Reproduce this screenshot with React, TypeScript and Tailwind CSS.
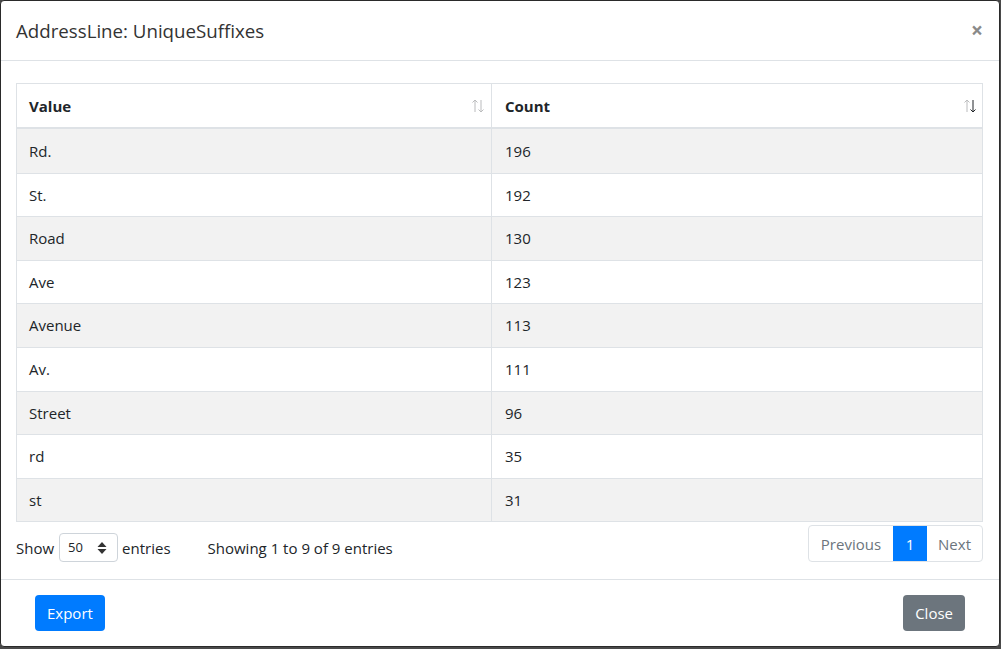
import React from "react";

const rows: [string, string][] = [
  ["Rd.", "196"],
  ["St.", "192"],
  ["Road", "130"],
  ["Ave", "123"],
  ["Avenue", "113"],
  ["Av.", "111"],
  ["Street", "96"],
  ["rd", "35"],
  ["st", "31"],
];

function SortIcon({ active }: { active?: boolean }) {
  return (
    <svg width="14" height="16" viewBox="0 0 14 16" className="shrink-0">
      <g stroke="#212529" strokeWidth="1" fill="none" opacity="0.3">
        <path d="M4 2 V14" />
        <path d="M1.5 4.5 L4 2 L6.5 4.5" />
      </g>
      <g stroke="#212529" strokeWidth="1" fill="none" opacity={active ? 1 : 0.3}>
        <path d="M10 2 V14" />
        <path d="M7.5 11.5 L10 14 L12.5 11.5" />
      </g>
    </svg>
  );
}

export default function App() {
  return (
    <div className="w-[1001px] h-[649px] bg-[#4a4a4a] overflow-hidden" style={{ fontFamily: '"Open Sans", sans-serif' }}>
      <div className="w-[1000px] h-[647px] bg-white rounded-[4px] border border-[#2a2a2a] flex flex-col text-[15px] text-[#212529]">
        {/* header */}
        <div className="h-[60px] shrink-0 flex items-center justify-between px-[15px] border-b border-[#dee2e6]">
          <div className="text-[18.7px] text-[#333] pt-[2px]">AddressLine: UniqueSuffixes</div>
          <div className="text-[21px] font-bold text-[#8a8a8a] leading-none pr-[1px]">×</div>
        </div>
        {/* body */}
        <div className="flex-1 pl-[15px] pr-[16px] pt-[22px]">
          <div className="border border-[#dee2e6]">
            <div className="flex h-[45px] border-b-2 border-[#dee2e6] font-bold">
              <div className="w-[475px] flex items-center justify-between pl-[12px] pr-[6px] border-r border-[#dee2e6]">
                <span className="pt-[1px]">Value</span>
                <SortIcon />
              </div>
              <div className="flex-1 flex items-center justify-between pl-[13px] pr-[5px]">
                <span className="pt-[1px]">Count</span>
                <SortIcon active />
              </div>
            </div>
            {rows.map(([v, c], i) => (
              <div
                key={v}
                className={`flex h-[43.6px] ${i > 0 ? "border-t border-[#dee2e6]" : ""} ${i % 2 === 0 ? "bg-[#f2f2f2]" : "bg-white"}`}
              >
                <div className="w-[475px] flex items-center pl-[12px] border-r border-[#dee2e6]">{v}</div>
                <div className="flex-1 flex items-center pl-[13px]">{c}</div>
              </div>
            ))}
          </div>
          <div className="flex items-start justify-between mt-[3px]">
            <div className="flex items-center h-[37px] mt-[4px]">
              <span>Show</span>
              <div className="ml-[5px] w-[59px] h-[29px] border border-[#ced4da] rounded-[4px] flex items-center justify-between pl-[8px] pr-[10px] text-[13px]">
                <span>50</span>
                <svg width="10" height="14" viewBox="0 0 10 14">
                  <path d="M5 1 L9.5 6 H0.5 Z" fill="#333" />
                  <path d="M5 13 L9.5 8 H0.5 Z" fill="#333" />
                </svg>
              </div>
              <span className="ml-[4px]">entries</span>
              <span className="ml-[37px]">Showing 1 to 9 of 9 entries</span>
            </div>
            <div className="flex h-[37px] border border-[#dee2e6] rounded-[4px] overflow-hidden text-[#6c757d]">
              <div className="px-[12px] flex items-center">Previous</div>
              <div className="w-[34px] flex items-center justify-center bg-[#007bff] text-white">1</div>
              <div className="px-[11px] flex items-center">Next</div>
            </div>
          </div>
        </div>
        {/* footer */}
        <div className="h-[67px] shrink-0 border-t border-[#dee2e6] flex items-center justify-between pl-[34px] pr-[34px]">
          <button className="h-[36px] px-[12px] bg-[#007bff] text-white rounded-[4px] text-[15px]">Export</button>
          <button className="h-[36px] px-[12px] bg-[#6c757d] text-white rounded-[4px] text-[15px]">Close</button>
        </div>
      </div>
    </div>
  );
}
